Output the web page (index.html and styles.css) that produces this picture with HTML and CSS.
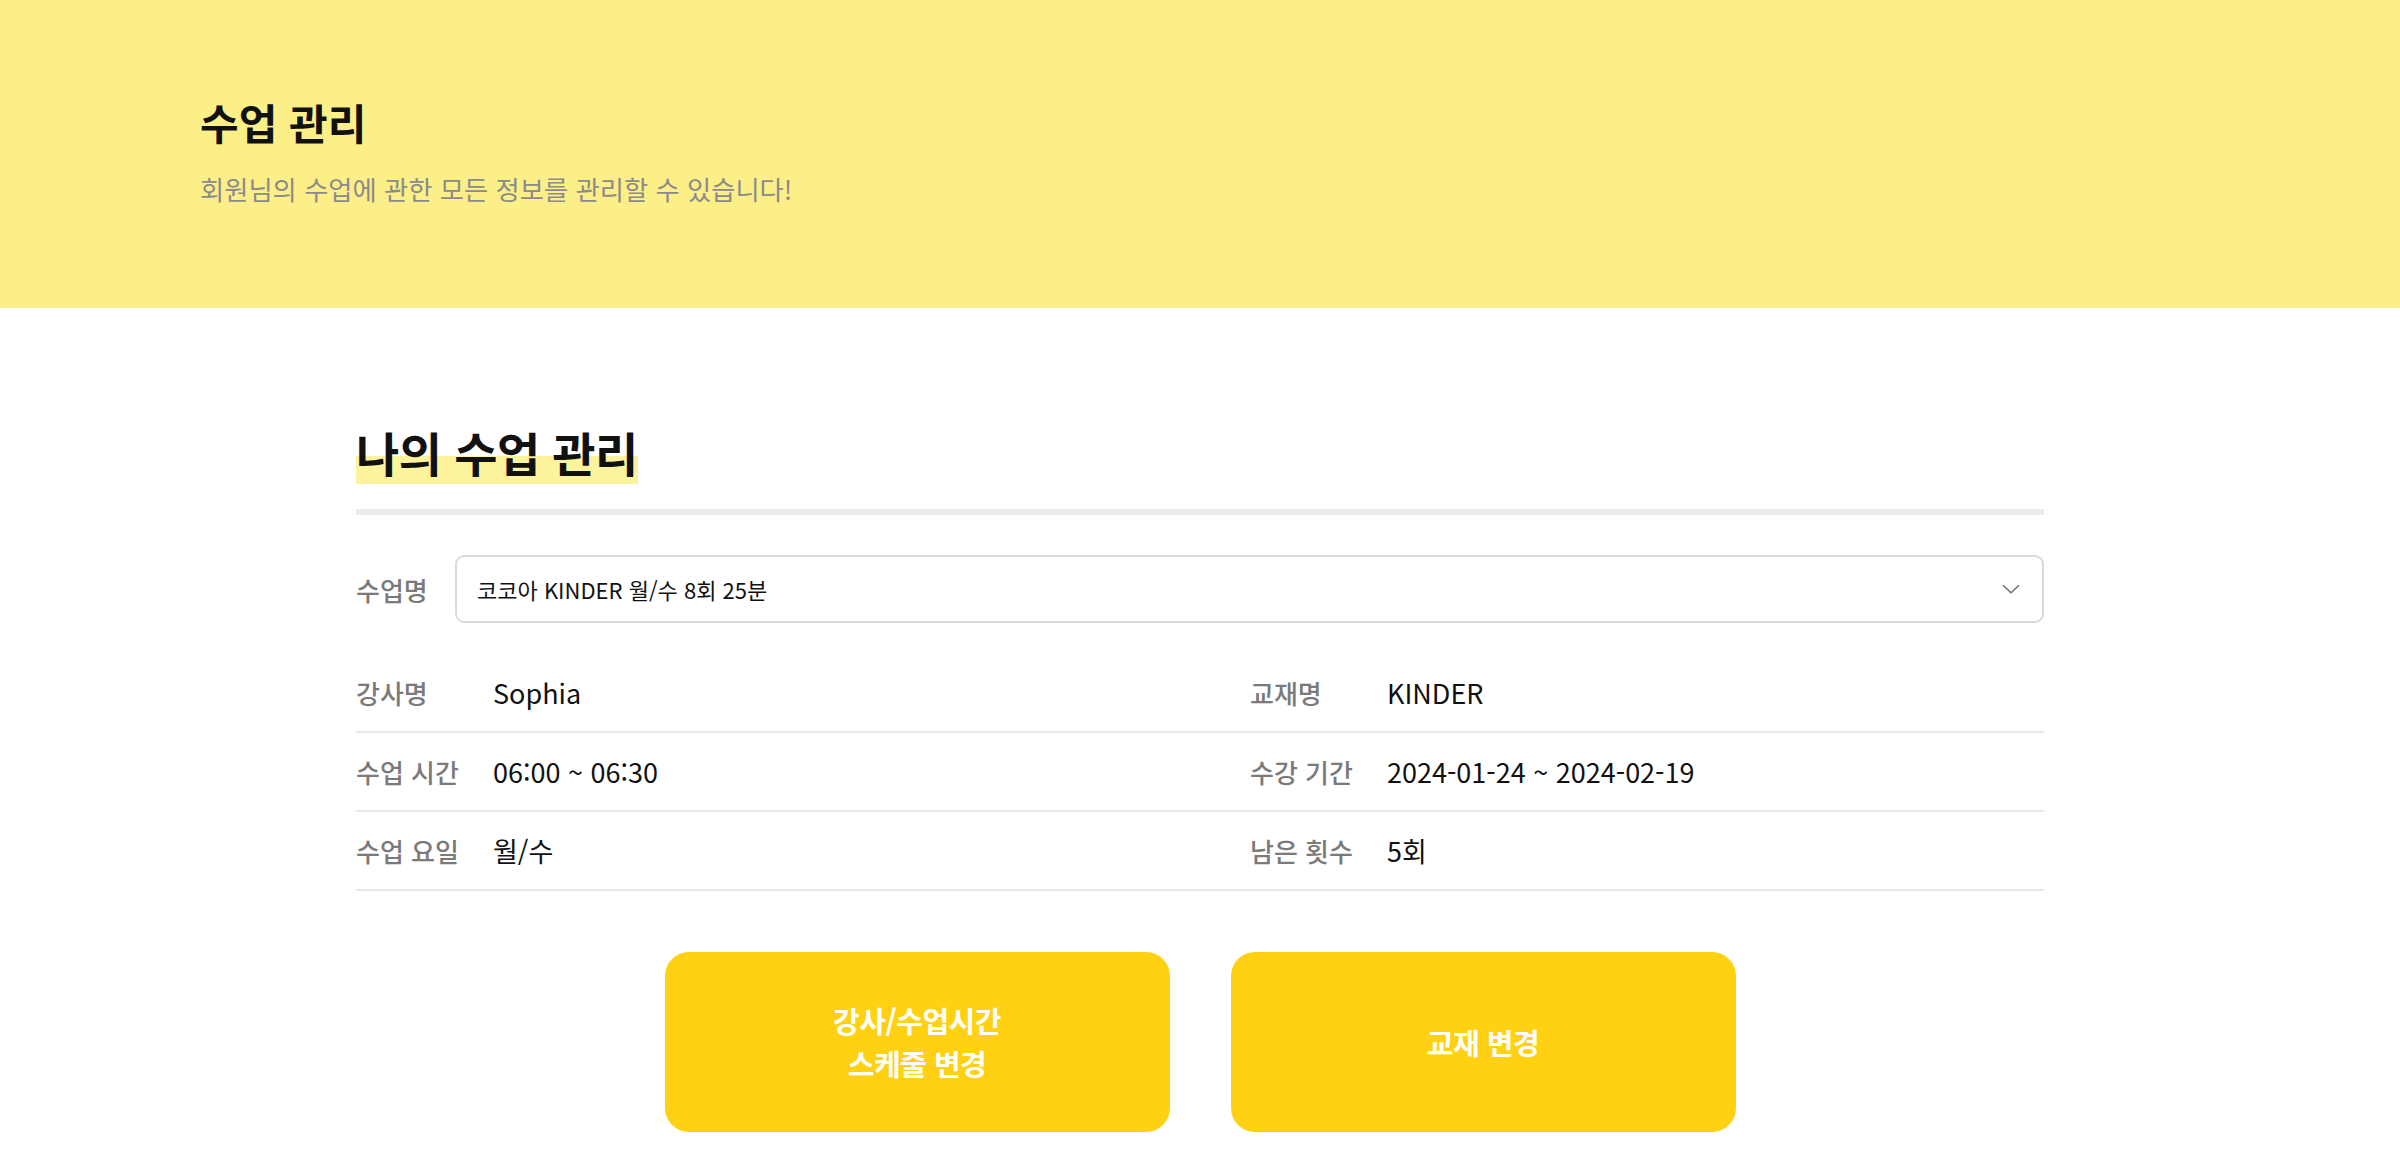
FILE: index.html
```html
<!DOCTYPE html>
<html lang="ko">
<head>
<meta charset="utf-8">
<title>수업 관리</title>
<link rel="stylesheet" href="styles.css">
</head>
<body>
<header class="hero">
  <h1 class="hero-title">수업 관리</h1>
  <p class="hero-sub">회원님의 수업에 관한 모든 정보를 관리할 수 있습니다!</p>
</header>
<main class="content">
  <h2 class="section-title"><span class="mark">나의 수업 관리</span></h2>
  <div class="rule"></div>
  <div class="select-row">
    <span class="select-label">수업명</span>
    <div class="select-box">
      <span class="select-value">코코아 KINDER 월/수 8회 25분</span>
      <svg class="chevron" width="18" height="10" viewBox="0 0 18 10"><path d="M1 1.2 9 8.8 17 1.2" fill="none" stroke="#6b6b6b" stroke-width="1.4"/></svg>
    </div>
  </div>
  <div class="info">
    <div class="info-row">
      <div class="cell"><span class="label">강사명</span><span class="value">Sophia</span></div>
      <div class="cell"><span class="label">교재명</span><span class="value">KINDER</span></div>
    </div>
    <div class="info-row">
      <div class="cell"><span class="label">수업 시간</span><span class="value">06:00 ~ 06:30</span></div>
      <div class="cell"><span class="label">수강 기간</span><span class="value">2024-01-24 ~ 2024-02-19</span></div>
    </div>
    <div class="info-row">
      <div class="cell"><span class="label">수업 요일</span><span class="value">월/수</span></div>
      <div class="cell"><span class="label">남은 횟수</span><span class="value">5회</span></div>
    </div>
  </div>
  <div class="actions">
    <button class="btn">강사/수업시간<br>스케줄 변경</button>
    <button class="btn">교재 변경</button>
  </div>
</main>
</body>
</html>
```
FILE: styles.css
```css
* { box-sizing: border-box; }
html, body {
  margin: 0;
  padding: 0;
  background: #ffffff;
  font-family: "Noto Sans CJK KR", "Noto Sans", sans-serif;
  color: #111111;
}
.hero {
  background: #fdef88;
  height: 308px;
  padding: 95px 0 0 200px;
}
.hero-title {
  margin: 0;
  font-size: 42px;
  font-weight: 700;
  line-height: 54px;
  color: #111;
}
.hero-sub {
  margin: 23px 0 0;
  font-size: 26.3px;
  line-height: 34px;
  color: #8b8b8b;
}
.content {
  width: 1688px;
  margin: 0 auto;
  padding-top: 120px;
}
.section-title {
  display: flex;
  margin: 0;
  font-size: 47px;
  font-weight: 700;
  line-height: 1;
  letter-spacing: -0.5px;
}
.mark {
  display: block;
  padding-bottom: 9px;
  background: linear-gradient(to bottom, transparent 50%, #fdf39d 50%);
}
.rule {
  height: 6px;
  background: #ececec;
  margin-top: 25px;
}
.select-row {
  display: flex;
  align-items: center;
  margin-top: 40px;
}
.select-label {
  width: 99px;
  font-size: 26px;
  font-weight: 500;
  color: #7a7a7a;
}
.select-box {
  flex: 1;
  height: 68px;
  border: 2px solid #dadada;
  border-radius: 9px;
  display: flex;
  align-items: center;
  justify-content: space-between;
  padding: 0 22px 0 20px;
}
.select-value {
  font-size: 22px;
  color: #111;
}
.info {
  margin-top: 31px;
}
.info-row {
  display: grid;
  grid-template-columns: 894px 1fr;
  height: 79px;
  border-bottom: 2px solid #e8e8e8;
  align-items: center;
}
.cell {
  display: flex;
  align-items: center;
}
.label {
  width: 137px;
  font-size: 26px;
  font-weight: 500;
  color: #7a7a7a;
}
.value {
  font-size: 27px;
  color: #111;
}
.actions {
  display: flex;
  justify-content: center;
  gap: 61px;
  margin-top: 61px;
}
.btn {
  width: 505px;
  height: 180px;
  border: none;
  border-radius: 24px;
  background: #ffd112;
  color: #ffffff;
  font-family: "Noto Sans CJK KR", "Noto Sans", sans-serif;
  font-size: 29px;
  font-weight: 700;
  line-height: 43px;
  letter-spacing: -0.5px;
}
```
